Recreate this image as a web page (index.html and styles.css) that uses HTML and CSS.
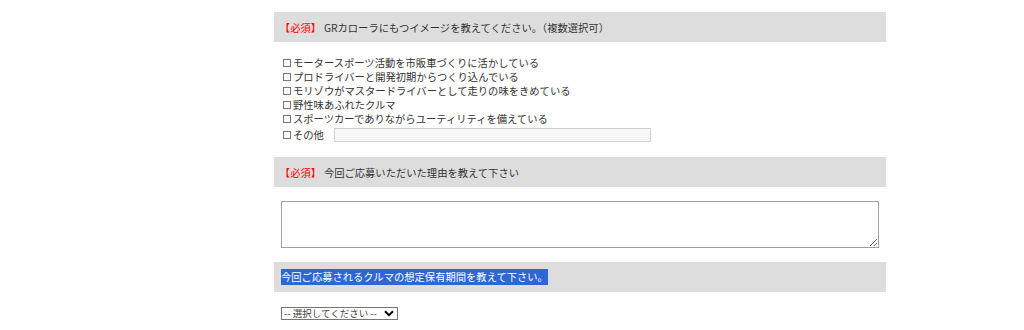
FILE: index.html
```html
<!DOCTYPE html>
<html lang="ja">
	<head>
		<meta charset="utf-8" />
		<title>アンケート</title>
		<link rel="stylesheet" href="styles.css">
	</head>
	<body>
	<div class="form">
		<div class="q-head"><span class="req">【必須】</span>GRカローラにもつイメージを教えてください。（複数選択可）</div>
		<ul class="choices">
			<li><label><input type="checkbox">モータースポーツ活動を市販車づくりに活かしている</label></li>
			<li><label><input type="checkbox">プロドライバーと開発初期からつくり込んでいる</label></li>
			<li><label><input type="checkbox">モリゾウがマスタードライバーとして走りの味をきめている</label></li>
			<li><label><input type="checkbox">野性味あふれたクルマ</label></li>
			<li><label><input type="checkbox">スポーツカーでありながらユーティリティを備えている</label></li>
			<li class="other"><label><input type="checkbox">その他</label><input type="text" class="other-text"></li>
		</ul>

		<div class="q-head"><span class="req">【必須】</span>今回ご応募いただいた理由を教えて下さい</div>
		<div class="answer">
			<textarea></textarea>
		</div>

		<div class="q-head plain"><span class="hl">今回ご応募されるクルマの想定保有期間を教えて下さい。</span></div>
		<div class="answer select-row">
			<div class="select">
				<span>-- 選択してください --</span>
				<svg width="10" height="7" viewBox="0 0 10 7"><path d="M1 1.2 L5 5.2 L9 1.2" fill="none" stroke="#000" stroke-width="2"/></svg>
			</div>
		</div>
	</div>
	</body>
</html>
```

FILE: styles.css
```css
body{
	margin: 0;
	background-color: #fff;
	color: #333;
	font-family: "Noto Sans CJK JP", "Liberation Sans", sans-serif;
}
.form{
	width: 612px;
	margin-left: 274px;
	padding-top: 12px;
}
.q-head{
	height: 30px;
	display: flex;
	align-items: center;
	padding-left: 11px;
	background-color: #dddddd;
	font-size: 10.3px;
}
.q-head.plain{
	padding-left: 7px;
}
.req{
	color: #ff0000;
	font-feature-settings: "halt";
	margin-right: 8px;
}
.hl{
	background-color: #2f66d6;
	color: #fff;
	line-height: 16px;
}
.choices{
	list-style: none;
	margin: 14px 0;
	padding-left: 9px;
	font-size: 10.3px;
	line-height: 14px;
}
.choices label{
	display: inline-flex;
	align-items: center;
}
.choices input[type=checkbox]{
	appearance: none;
	-webkit-appearance: none;
	box-sizing: border-box;
	width: 8px;
	height: 8px;
	margin: 0 2px 0 0;
	border: 1px solid #777;
	background-color: #fff;
}
.other{
	display: flex;
	align-items: center;
	height: 16px;
	margin-top: 1px;
}
.other-text{
	box-sizing: border-box;
	width: 317px;
	height: 14px;
	margin: 0 0 0 10px;
	padding: 0;
	border: 1px solid #d0d0d0;
	background-color: #f7f7f7;
}
.answer{
	padding: 14px 7px;
}
textarea{
	display: block;
	box-sizing: border-box;
	width: 598px;
	height: 47px;
	margin: 0;
	border: 1px solid #a0a0a0;
}
.select-row{
	display: flex;
	padding-top: 15px;
}
.select{
	display: flex;
	align-items: center;
	justify-content: space-between;
	box-sizing: border-box;
	width: 117px;
	height: 13px;
	padding: 0 3px 0 2px;
	border: 1px solid #767676;
	color: #444;
	font-size: 9.5px;
	line-height: 1;
}
```
